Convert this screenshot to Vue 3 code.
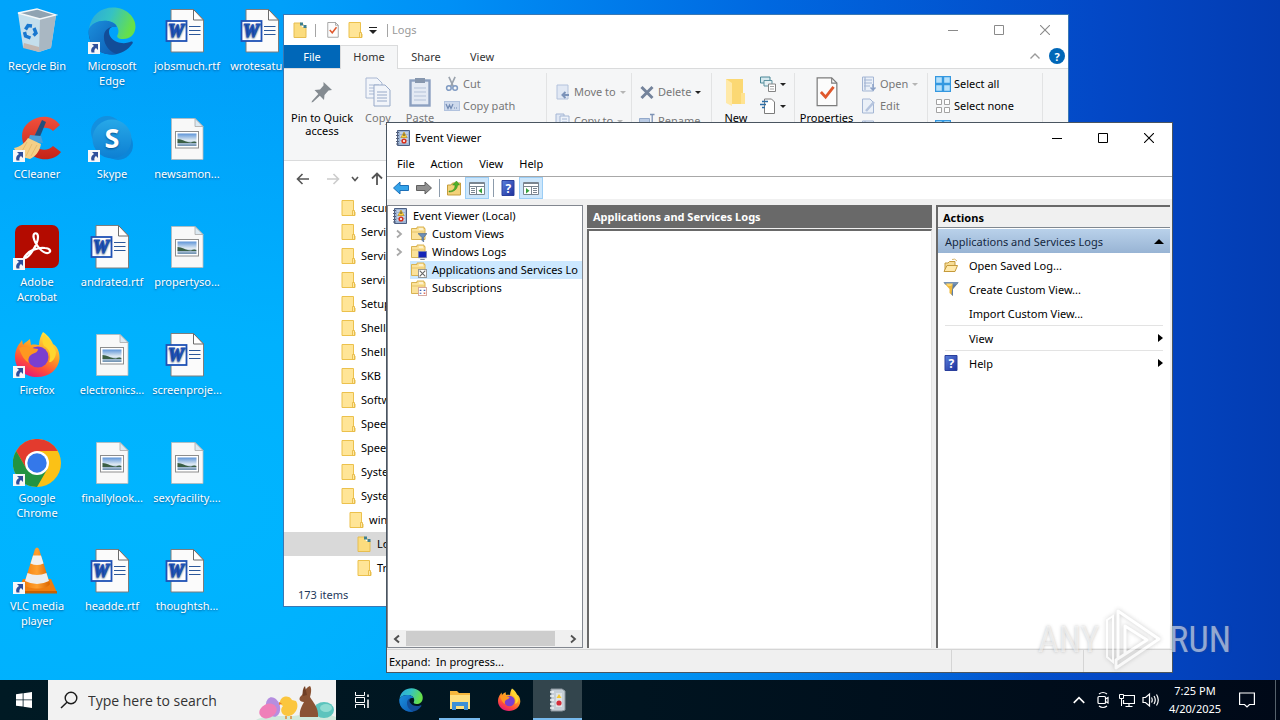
<template>
  <div class="screen">
    <!-- Shared icon sprite -->
    <svg class="sprite" aria-hidden="true">
      <defs>
        <linearGradient id="g-edge-top" x1="0" y1="0" x2="1" y2="0.3">
          <stop offset="0" stop-color="#2aa7dd" />
          <stop offset="0.5" stop-color="#35c2c4" />
          <stop offset="1" stop-color="#66e04a" />
        </linearGradient>
        <linearGradient id="g-edge-low" x1="0" y1="0" x2="1" y2="1">
          <stop offset="0" stop-color="#1b8fdc" />
          <stop offset="1" stop-color="#0c5cb4" />
        </linearGradient>
        <linearGradient id="g-fox" x1="0.8" y1="0" x2="0.3" y2="1">
          <stop offset="0" stop-color="#fff34a" />
          <stop offset="0.45" stop-color="#ff9a22" />
          <stop offset="0.75" stop-color="#ff4a3c" />
          <stop offset="1" stop-color="#e3187a" />
        </linearGradient>
        <linearGradient id="g-skype" x1="0" y1="0" x2="0" y2="1">
          <stop offset="0" stop-color="#27a8e8" />
          <stop offset="1" stop-color="#0d7fd2" />
        </linearGradient>
        <linearGradient id="g-photo" x1="0" y1="0" x2="0" y2="1">
          <stop offset="0" stop-color="#5d94d8" />
          <stop offset="0.55" stop-color="#dfeaf2" />
          <stop offset="1" stop-color="#6d8fb0" />
        </linearGradient>
        <linearGradient id="g-cone" x1="0" y1="0" x2="1" y2="0">
          <stop offset="0" stop-color="#f47d0a" />
          <stop offset="0.5" stop-color="#ffa030" />
          <stop offset="1" stop-color="#d96400" />
        </linearGradient>
        <linearGradient id="g-red" x1="0" y1="0" x2="0" y2="1">
          <stop offset="0" stop-color="#f0503c" />
          <stop offset="1" stop-color="#c42318" />
        </linearGradient>
        <linearGradient id="g-help" x1="0" y1="0" x2="1" y2="1">
          <stop offset="0" stop-color="#5a80dc" />
          <stop offset="1" stop-color="#1c2f9c" />
        </linearGradient>
      </defs>

      <symbol id="recycle" viewBox="0 0 48 48">
        <path d="M5 6 24 2 43 8 38 41 26 45 10 40Z" fill="#d9e4ea" opacity="0.9" />
        <path d="M27 12 43 8 38 41 26 45Z" fill="#a9b7c2" />
        <path d="M5 6 24 2 43 8 27 12Z" fill="#8fa3b2" stroke="#f4f8fa" stroke-width="1.3" />
        <path d="M11 36 26 40 26 45 10 41Z" fill="#c3b6b0" />
        <g fill="none" stroke="#1977cf" stroke-width="3.4">
          <path d="M12.500 22.500 15 18.500 19 19" />
          <path d="M21 21 23 26 20.500 28.500" />
          <path d="M17.500 31 12.500 29 11.500 25" />
        </g>
      </symbol>

      <symbol id="edge" viewBox="0 0 48 48">
        <path d="M1 22C-1 36 9 48 25 47.500 33 47 40 43 44.500 36.500 45.500 34.500 44 34 42 35 36 37.500 26 36 22 29 19 23 23 18 28.500 20L20 14Z" fill="#124d98" />
        <path d="M1 22C3 8 13 0.500 25 0.500 39 0.500 48 11 47.500 20 47 28 42 32 35 32 30 32 28 30 30 27 32 22 28 15 20 14 11 13 4 16 1 22Z" fill="url(#g-edge-top)" />
        <path d="M1 22C4 16 11 13 20 14 26 15 29 18 28.500 20 22 19 17 22 16 28 15 38 22 45 29 47 12 50-1 38 1 22Z" fill="url(#g-edge-low)" />
      </symbol>

      <symbol id="ccleaner" viewBox="0 0 48 48">
        <path d="M47 10 40 16C35 11 26 12 23 18 20 25 22 31 27 34 32 36 37 34 40 31L48 37C42 45 31 46 22 42 11 36 7 24 10 15 15 3 36-5 47 10Z" fill="url(#g-red)" />
        <path d="M29 5 33 7 26 24 21 22Z" fill="#234f7c" />
        <path d="M17 20 28 21 30 28 15 26Z" fill="#4aa0da" />
        <path d="M15 23 28 29C27 36 22 42 17 44L5 41 1 33C7 32 12 28 15 23Z" fill="#f5cf87" />
        <path d="M14 27 8 38M19 29 13 41M24 30 18 41" stroke="#e3b566" stroke-width="0.800" />
      </symbol>

      <symbol id="skype" viewBox="0 0 48 48">
        <circle cx="19" cy="17" r="16" fill="#1390df" />
        <circle cx="30" cy="30" r="15" fill="#0c86d8" />
        <circle cx="24" cy="24" r="19.500" fill="url(#g-skype)" />
        <text x="24" y="33" text-anchor="middle" font-family="'Open Sans', sans-serif" font-weight="700" font-size="27" fill="#fff">S</text>
      </symbol>

      <symbol id="acrobat" viewBox="0 0 48 48">
        <rect x="2" y="2" width="44" height="43" rx="7" fill="#b30b00" />
        <path d="M12 35C16 35 25 21 25 14 25 9 20 9 20.500 14 22 22 30 31 35 30 39 29 37 25 32 25 24 24 16 28 13 32 10 35 11 36 12 35Z" fill="none" stroke="#fff" stroke-width="2.200" />
      </symbol>

      <symbol id="firefox" viewBox="0 0 48 48">
        <path d="M30 1C36 5 39 10 40 13 44 15 47 21 46.500 28 45 39 36 46 24 46 12 46 2 38 2 26 2 21 4 15 7 12L9 9 10 14C12 11 15 10 17 8L18 14C21 13 24 14 26 14 26 9 28 4 30 1Z" fill="url(#g-fox)" />
        <circle cx="25" cy="26" r="10.500" fill="#7a3fd0" />
        <path d="M6 17C11 14 18 17 25 18 25 22 20 22 18 24 15 26 15 30 16 32 12 30 8 24 6 17Z" fill="#ff9820" />
        <path d="M31 15C36 17 39 25 36 31 39 32 43 27 43 21 42 16 36 9 31 3 29 8 29 11 31 15Z" fill="#ffd62e" />
      </symbol>

      <symbol id="chrome" viewBox="0 0 48 48">
        <circle cx="24" cy="24" r="24" fill="#fbc116" />
        <path d="M3.200 12A24 24 0 0 1 44.800 12H24L13.600 30Z" fill="#e33b2e" />
        <path d="M3.200 12A24 24 0 0 0 24 48L34.400 30 24 36 13.600 30Z" fill="#229342" />
        <circle cx="24" cy="24" r="12" fill="#fff" />
        <circle cx="24" cy="24" r="9.700" fill="#3478ea" />
      </symbol>

      <symbol id="vlc" viewBox="0 0 48 48">
        <path d="M10 32H38L44 45.500H4Z" fill="#ef7d10" />
        <path d="M4 44H44V46.500H4Z" fill="#c96000" />
        <path d="M22 2Q24-1 26 2L37 37C34 43 14 43 11 37Z" fill="url(#g-cone)" />
        <path d="M20 8.500H28L30.500 16.500Q24 19.500 17.500 16.500Z" fill="#f1f1f1" />
        <path d="M14.500 26Q24 30 33.500 26L36 34Q24 40 12 34Z" fill="#ededed" />
      </symbol>

      <symbol id="word" viewBox="0 0 48 48">
        <path d="M8 2.500H30.500L40.500 13V45H8Z" fill="#fbfbfb" stroke="#7d7d7d" stroke-width="1" />
        <path d="M30.500 2.500V13H40.500Z" fill="#fff" stroke="#6b6b6b" stroke-width="1" />
        <path d="M26 19.500H37.500M26 23.500H37.500M26 27.500H37.500" stroke="#2b579a" stroke-width="1.200" />
        <rect x="3.500" y="14" width="20" height="20" fill="#fff" stroke="#1f51b5" stroke-width="1.800" />
        <text x="13" y="30" text-anchor="middle" font-family="'Liberation Serif', serif" font-weight="700" font-style="italic" font-size="18" fill="#1f51b5" stroke="#1f51b5" stroke-width="1.200">W</text>
      </symbol>

      <symbol id="photo" viewBox="0 0 48 48">
        <path d="M8.500 3.500H32L40 11.500V44.500H8.500Z" fill="#f8f8f8" stroke="#b9b9b9" stroke-width="0.800" />
        <path d="M32 3.500V11.500H40Z" fill="#dce9f2" stroke="#a8a8a8" stroke-width="0.800" />
        <rect x="12.500" y="16.500" width="23" height="16.500" fill="#fff" stroke="#8d8d8d" />
        <rect x="14.500" y="18.500" width="19" height="12.500" fill="url(#g-photo)" />
        <path d="M14.500 24C19 24 22 27 28 27.500 30 26 33.500 26 33.500 28H14.500Z" fill="#3a5f45" />
      </symbol>

      <symbol id="shortcut" viewBox="0 0 12 12">
        <path d="M0 0H12V12H0Z" fill="#f6f7f9" />
        <path d="M4 2H10V8L8 6C6.500 7 6 8.500 6.500 10.500H3.500C2.500 7.500 3.500 5.500 6 4Z" fill="#2f4f9b" />
      </symbol>

      <symbol id="folder" viewBox="0 0 16 16">
        <path d="M2 0.500H13.500V11L15 12V15.500H2Z" fill="#ffe597" stroke="#ecc14c" stroke-width="1" />
        <path d="M12.500 10.500H14.500V15.500H12.500Z" fill="#ffeaa6" stroke="#e5b53c" stroke-width="0.800" />
      </symbol>

      <symbol id="folder-logs" viewBox="0 0 16 16">
        <path d="M2 1H9L14 5V15.500H2Z" fill="#fbdc7e" stroke="#e6bd50" stroke-width="1" />
        <path d="M8 0.500 13 5H10Z" fill="#fff" />
        <path d="M8 0.500H11V3.500H8ZM11.500 3H14.500V6H11.500Z" fill="#3f7f8f" />
      </symbol>

      <symbol id="check-page" viewBox="0 0 24 32">
        <path d="M1.500 1H17L22.500 6.500V30.500H1.500Z" fill="#fcfcfc" stroke="#7c7c7c" stroke-width="1.300" />
        <path d="M17 1V6.500H22.500" fill="none" stroke="#7c7c7c" stroke-width="1.200" />
        <path d="M5.500 16 10.500 21.500 19 10.500" fill="none" stroke="#e0582d" stroke-width="3" />
      </symbol>

      <symbol id="pin" viewBox="0 0 24 24">
        <path d="M13.500 2 22 10 18.500 10.500 14.500 15 14 20 9.800 15.700 3 22 1.500 22.500 2 21 8.300 14 4.500 10 10 9.500 13.500 5.500Z" fill="#848b91" />
      </symbol>

      <symbol id="copy" viewBox="0 0 26 30">
        <path d="M1 1H12L17 6V21H1Z" fill="#f2f5fa" stroke="#a9b8d2" />
        <path d="M4 8H14M4 11H14M4 14H14M4 17H14" stroke="#a9b8d2" />
        <path d="M9 8H20L25 13V29H9Z" fill="#f2f5fa" stroke="#97a9c8" />
        <path d="M12 15H22M12 18H22M12 21H22M12 24H22" stroke="#97a9c8" />
      </symbol>

      <symbol id="paste" viewBox="0 0 22 30">
        <rect x="1.500" y="3.500" width="19" height="25" fill="#e4eaf4" stroke="#8ca0c0" stroke-width="2.400" />
        <rect x="6" y="1" width="10" height="5" fill="#8797ae" />
        <path d="M5 11H17M5 15H17M5 19H17M5 23H17" stroke="#b3c1d8" />
      </symbol>

      <symbol id="scissors" viewBox="0 0 16 18">
        <path d="M4.500 1 9.500 12M11.500 1 6.500 12" stroke="#9aa2ad" stroke-width="1.800" />
        <circle cx="4.500" cy="13.500" r="2.600" fill="none" stroke="#7f9ac2" stroke-width="1.700" />
        <circle cx="11.500" cy="13.500" r="2.600" fill="none" stroke="#7f9ac2" stroke-width="1.700" />
      </symbol>

      <symbol id="path-chip" viewBox="0 0 16 16">
        <rect x="0.500" y="3.500" width="15" height="9" fill="#cdd9ec" stroke="#b1c2de" />
        <path d="M2 6 4 10.500 5.500 7 7 10.500 9 6M10 10H11M12 10H13" fill="none" stroke="#7089b2" stroke-width="1.200" />
      </symbol>

      <symbol id="page-arrow" viewBox="0 0 16 16">
        <path d="M2 1H13V15H2Z" fill="#e1e8f4" stroke="#b3c2dc" />
        <path d="M14 11H8M10.500 8 7.500 11 10.500 14" fill="none" stroke="#7c93b9" stroke-width="2" />
      </symbol>

      <symbol id="page-copy" viewBox="0 0 16 16">
        <path d="M1 1H9V13H1Z" fill="#e1e8f4" stroke="#a4b6d4" />
        <path d="M5 3H14V15H5Z" fill="#edf2f9" stroke="#a4b6d4" />
        <path d="M7 6H12M7 9H12" stroke="#a4b6d4" />
      </symbol>

      <symbol id="cross" viewBox="0 0 16 16">
        <path d="M2.500 3 13.500 14M13.500 3 2.500 14" stroke="#74839b" stroke-width="3" />
      </symbol>

      <symbol id="rename" viewBox="0 0 16 16">
        <path d="M0.500 5.500H10.500V11.500H0.500Z" fill="#b9cae3" stroke="#93a9cb" />
        <path d="M11 1.500H15.500M13.200 1.500V14" stroke="#7d92b5" stroke-width="1.300" />
      </symbol>

      <symbol id="big-folder" viewBox="0 0 24 30">
        <path d="M2 2H19V17L21 19V27H8L2 25Z" fill="#fbd873" />
        <path d="M2 2 8 6V29L2 26Z" fill="#ffe9a8" />
        <path d="M17 16H21V27H17Z" fill="#ffe391" />
      </symbol>

      <symbol id="new-item" viewBox="0 0 16 16">
        <path d="M0.500 1H10V7H0.500Z" fill="#d5e8ee" stroke="#4b8797" />
        <path d="M4 4.500H12V10H4Z" fill="#e6f0f3" stroke="#5d919f" />
        <path d="M8.500 8H15.500V15.500H8.500Z" fill="#fff" stroke="#858585" />
        <path d="M10 10.500H14M10 13H14" stroke="#a5a5a5" />
      </symbol>

      <symbol id="easy-access" viewBox="0 0 16 16">
        <path d="M4.500 1H11.500L14.500 4V15.500H4.500Z" fill="#fff" stroke="#7b7b7b" />
        <path d="M2 3.500H8M0 6.500H6M2 9.500H5" stroke="#2c6ea6" stroke-width="1.400" />
      </symbol>

      <symbol id="open" viewBox="0 0 16 16">
        <path d="M1.500 1H12.500V15H1.500Z" fill="#eaf0f8" stroke="#a4b6d4" />
        <path d="M3 4H11M3 7H11M3 10H9M4 1V14" stroke="#a4b6d4" stroke-width="1.200" />
        <path d="M12 8V14M9.500 11.500 12 14 14.500 11.500" fill="none" stroke="#8ba1c6" stroke-width="1.500" />
      </symbol>

      <symbol id="edit" viewBox="0 0 16 16">
        <path d="M1.500 1H9L12.500 4.500V15H1.500Z" fill="#eaf0f8" stroke="#a4b6d4" />
        <path d="M5 13 13 4" stroke="#b5c4de" stroke-width="2.500" />
      </symbol>

      <symbol id="select-all" viewBox="0 0 16 16">
        <path d="M0.600 0.600H7.400V7.400H0.600ZM8.600 0.600H15.400V7.400H8.600ZM0.600 8.600H7.400V15.400H0.600ZM8.600 8.600H15.400V15.400H8.600Z" fill="#b5e0fb" stroke="#3498e0" stroke-width="1.200" />
      </symbol>

      <symbol id="select-none" viewBox="0 0 16 16">
        <path d="M1.500 1.500H6.500V6.500H1.500ZM9.500 1.500H14.500V6.500H9.500ZM1.500 9.500H6.500V14.500H1.500ZM9.500 9.500H14.500V14.500H9.500Z" fill="#fff" stroke="#a3a3a3" />
      </symbol>

      <symbol id="journal" viewBox="0 0 16 16">
        <path d="M2.500 0.500H14.500V15.500H2.500Z" fill="#9db4d4" stroke="#4c5f83" />
        <path d="M5 3H13M5 6H13M5 9H13M5 12H13" stroke="#e8eef6" />
        <path d="M1 2.500H4M1 5.500H4M1 8.500H4M1 11.500H4M1 14H4" stroke="#55607a" />
        <path d="M9 2 12 7.500H6Z" fill="#ffd437" stroke="#c08c10" stroke-width="0.600" />
        <path d="M9 3.500V6" stroke="#333" />
        <circle cx="9" cy="11" r="2.600" fill="#d8321e" />
        <path d="M8 10 10 12M10 10 8 12" stroke="#fff" stroke-width="0.800" />
      </symbol>

      <symbol id="arrow-left" viewBox="0 0 16 16">
        <path d="M0.500 8 7 2V5.500H15.500V10.500H7V14Z" fill="#35a4ea" stroke="#1b6fb8" />
      </symbol>

      <symbol id="arrow-right" viewBox="0 0 16 16">
        <path d="M15.500 8 9 2V5.500H0.500V10.500H9V14Z" fill="#8f8f8f" stroke="#606060" />
      </symbol>

      <symbol id="folder-up" viewBox="0 0 16 16">
        <path d="M1.500 5H5L6.500 3H14.500V15H1.500Z" fill="#f3d27b" stroke="#c69d3c" />
        <path d="M3 11C7 11 9 9 9 5H6.500L10.500 1 13.500 5H11.500C11.500 9 8 12 3 12Z" fill="#4fb02c" stroke="#2f8a15" stroke-width="0.500" />
      </symbol>

      <symbol id="pane-left" viewBox="0 0 16 16">
        <path d="M0.500 2.500H15.500V14.500H0.500Z" fill="#fff" stroke="#7a8590" />
        <path d="M0.500 3.500H15.500M0.500 6.500H15.500M7.500 7V14.500" stroke="#7a8590" />
        <path d="M2 8.500H6M2 10.500H6M2 12.500H6" stroke="#7a8590" />
        <path d="M13 8V13.500L9.500 10.700Z" fill="#35a03a" />
      </symbol>

      <symbol id="pane-right" viewBox="0 0 16 16">
        <path d="M0.500 2.500H15.500V14.500H0.500Z" fill="#fff" stroke="#7a8590" />
        <path d="M0.500 3.500H15.500M0.500 6.500H15.500M8.500 7V14.500" stroke="#7a8590" />
        <path d="M10 8.500H14M10 10.500H14M10 12.500H14" stroke="#7a8590" />
        <path d="M3 8V13.500L6.500 10.700Z" fill="#35a03a" />
      </symbol>

      <symbol id="help" viewBox="0 0 16 16">
        <path d="M2 0.500H14V15.500H2Z" fill="url(#g-help)" stroke="#2a3f9c" />
        <text x="8.300" y="12.500" text-anchor="middle" font-family="'Open Sans', sans-serif" font-weight="700" font-size="12" fill="#fff">?</text>
      </symbol>

      <symbol id="tree-folder" viewBox="0 0 16 16">
        <path d="M0.500 2.500H6V1H13V2.500H14V13.500H0.500Z" fill="#fbe29a" stroke="#d9b352" />
        <path d="M1 6H14" stroke="#e7c469" />
        <path d="M8 3H12" stroke="#fff" />
      </symbol>

      <symbol id="badge-filter" viewBox="0 0 8 8">
        <path d="M0 0.500H8L5 4V8L3.500 6.500V4Z" fill="#6e8fb6" stroke="#3c5a80" stroke-width="0.500" />
      </symbol>
      <symbol id="badge-screen" viewBox="0 0 8 8">
        <path d="M0.300 0.300H7.700V6H0.300Z" fill="#1626b8" stroke="#8c98a8" stroke-width="0.600" />
        <path d="M2 7.500H6" stroke="#7c8796" />
      </symbol>
      <symbol id="badge-config" viewBox="0 0 8 8">
        <path d="M0.300 0.300H7.700V7.700H0.300Z" fill="#fff" stroke="#777" stroke-width="0.800" />
        <path d="M1.500 1.500 6.500 6.500M6.500 1.500 1.500 6.500" stroke="#666" />
      </symbol>
      <symbol id="badge-calendar" viewBox="0 0 8 8">
        <path d="M0.300 0.300H7.700V7.700H0.300Z" fill="#fff" stroke="#c98f84" stroke-width="0.800" />
        <path d="M1.500 3H3M5 3H6.500M1.500 5.500H3" stroke="#3f63b5" />
        <path d="M5 5.500H6.500" stroke="#d2402c" />
      </symbol>

      <symbol id="open-log" viewBox="0 0 16 16">
        <path d="M2 14V6H5L6.500 4.500H12V8" fill="#f6dc95" stroke="#c59a3b" />
        <path d="M1 14.500 4 8.500H14.500L12 14.500Z" fill="#ffe9ac" stroke="#c59a3b" />
        <path d="M9 2.500Q12 1 14 4" fill="none" stroke="#d9b76a" />
      </symbol>

      <symbol id="funnel" viewBox="0 0 16 16">
        <path d="M0.500 1.500H15.500L10 8V15L6.500 12V8Z" fill="#f0b93b" />
        <path d="M10 1.500H15.500L10 8V15L8.500 13.500Z" fill="#5d7ea8" />
        <path d="M0.500 1H15.500L14 3.500H2Z" fill="#7793b5" />
        <path d="M3 2.500H10L8 5H5Z" fill="#ffd669" />
      </symbol>

      <symbol id="win-logo" viewBox="0 0 16 16">
        <path d="M0 2.300 6.700 1.300V7.500H0ZM7.500 1.200 16 0V7.500H7.500ZM0 8.300H6.700V14.600L0 13.700ZM7.500 8.300H16V16L7.500 14.800Z" fill="#fff" />
      </symbol>

      <symbol id="lens" viewBox="0 0 18 18">
        <circle cx="11" cy="7" r="5.800" fill="none" stroke="#1c1c1c" stroke-width="1.400" />
        <path d="M7 11.200 1 17" stroke="#1c1c1c" stroke-width="1.500" />
      </symbol>

      <symbol id="easter" viewBox="0 0 80 40">
        <path d="M0 40C12 33 30 38 44 35 58 31 70 33 80 37V40Z" fill="#cfe9dc" />
        <ellipse cx="68" cy="30" rx="10" ry="8" fill="#5cc4bd" />
        <ellipse cx="70" cy="28" rx="6" ry="4" fill="#8fdcd2" />
        <ellipse cx="17" cy="27" rx="7" ry="10" transform="rotate(-15 17 27)" fill="#b58ee0" />
        <ellipse cx="12" cy="31" rx="9" ry="7" transform="rotate(-25 12 31)" fill="#ef7fb9" />
        <path d="M24 24C23 16 33 14 36 20L40 21C44 27 39 36 32 36 26 36 23 30 27 26Z" fill="#fbc63e" />
        <path d="M23 22 26 23.500 23 25Z" fill="#ec7d22" />
        <path d="M30 36V39M35 36V39" stroke="#e07d20" stroke-width="1.300" />
        <path d="M54 6C56 8 55 14 54 17 57 22 63 28 62 37H44C43 30 46 26 48 22 43 22 42 18 46 15 48 11 51 7 54 6Z" fill="#8a5334" />
        <path d="M49 6C47 8 46 12 47 16L51 15Z" fill="#6f3f26" />
      </symbol>

      <symbol id="task-view" viewBox="0 0 16 16">
        <path d="M1.500 0V3.500H10.500V0M1.500 16V12.500H10.500V16M1.500 5.500H10.500V10.500H1.500Z" fill="none" stroke="#fff" />
        <path d="M14 2.500V5M14 7.500V16" stroke="#fff" stroke-width="1.500" />
      </symbol>

      <symbol id="files" viewBox="0 0 24 24">
        <path d="M2 3H9L11 5H22V21H2Z" fill="#f6b73c" />
        <path d="M2 7H22V21H2Z" fill="#ffdf7e" />
        <path d="M4 14H20V22H16V18H8V22H4Z" fill="#3d8fd6" />
      </symbol>

      <symbol id="log-book" viewBox="0 0 20 24">
        <path d="M3 1H14L17 3V22L14 23H3Z" fill="#c5ced6" stroke="#8a949c" />
        <path d="M2 4H6M2 8H6M2 12H6M2 16H6M2 20H6" stroke="#eef2f4" stroke-width="1.500" />
        <path d="M8 5H14V19H8Z" fill="#dfe3e6" />
        <path d="M11 6 13.500 10H8.500Z" fill="#f5c72e" />
        <circle cx="11" cy="15" r="2.600" fill="#d42d3a" />
      </symbol>

      <symbol id="camera" viewBox="0 0 18 18">
        <path d="M5 3Q9 0 13 3M5 15Q9 18 13 15" fill="none" stroke="#fff" stroke-width="1.200" />
        <rect x="4" y="5.500" width="7.500" height="7" rx="1" fill="none" stroke="#fff" stroke-width="1.200" />
        <path d="M11.500 8 14 6.500V12L11.500 10.500" fill="none" stroke="#fff" stroke-width="1.200" />
      </symbol>

      <symbol id="network" viewBox="0 0 16 16">
        <path d="M5 3.500H15.500V11.500H4.500V8M10 11.500V14M6.500 14.500H13.500" fill="none" stroke="#fff" stroke-width="1.200" />
        <path d="M0.500 2.500H4.500V6.500H0.500ZM2.500 6.500V14" fill="none" stroke="#fff" />
      </symbol>

      <symbol id="sound" viewBox="0 0 18 16">
        <path d="M1 5.500H3.500L7.500 2V14L3.500 10.500H1Z" fill="none" stroke="#fff" stroke-width="1.200" />
        <path d="M9.500 5.500Q11 8 9.500 10.500M12 4Q14.500 8 12 12M14.500 2.500Q18 8 14.500 13.500" fill="none" stroke="#fff" stroke-width="1.200" />
      </symbol>

      <symbol id="notice" viewBox="0 0 16 16">
        <path d="M0.600 1H15.400V12.500H10.500L8 15 5.500 12.500H0.600Z" fill="none" stroke="#fff" stroke-width="1.200" />
      </symbol>

      <symbol id="chev-up" viewBox="0 0 12 12">
        <path d="M1.500 8.500 6 4 10.500 8.500" fill="none" stroke="currentColor" stroke-width="1.400" />
      </symbol>
      <symbol id="chev-down" viewBox="0 0 12 12">
        <path d="M3 4 6 7.500 9 4" fill="none" stroke="currentColor" stroke-width="1.600" />
      </symbol>
      <symbol id="chev-left" viewBox="0 0 12 12">
        <path d="M8 2.500 4 6 8 9.500" fill="none" stroke="currentColor" stroke-width="2" />
      </symbol>
      <symbol id="chev-right" viewBox="0 0 12 12">
        <path d="M4 2.500 8 6 4 9.500" fill="none" stroke="currentColor" stroke-width="1.800" />
      </symbol>
      <symbol id="nav-back" viewBox="0 0 14 14">
        <path d="M13 7H2M6.500 2 1.500 7 6.500 12" fill="none" stroke="currentColor" stroke-width="1.600" />
      </symbol>
      <symbol id="nav-next" viewBox="0 0 14 14">
        <path d="M1 7H12M7.500 2 12.500 7 7.500 12" fill="none" stroke="currentColor" stroke-width="1.600" />
      </symbol>
      <symbol id="nav-up" viewBox="0 0 14 14">
        <path d="M7 13V2M2 6.500 7 1.500 12 6.500" fill="none" stroke="currentColor" stroke-width="1.800" />
      </symbol>
      <symbol id="min" viewBox="0 0 10 10"><path d="M0 5.500H10" stroke="currentColor" /></symbol>
      <symbol id="max" viewBox="0 0 10 10"><path d="M0.500 0.500H9.500V9.500H0.500Z" fill="none" stroke="currentColor" /></symbol>
      <symbol id="close" viewBox="0 0 10 10"><path d="M0 0 10 10M10 0 0 10" stroke="currentColor" stroke-width="1.100" /></symbol>
    </svg>

    <main class="desktop">
      <div class="shortcuts">
        <button v-for="item in shortcuts" :key="item.name" class="shortcut">
          <span class="shortcut-art">
            <svg class="shortcut-icon"><use :href="'#' + item.icon" /></svg>
            <svg v-if="item.link" class="shortcut-badge"><use href="#shortcut" /></svg>
          </span>
          <span class="shortcut-name">{{ item.name }}</span>
        </button>
      </div>

      <!-- File Explorer -->
      <section class="window explorer" aria-label="Logs">
        <header class="ex-title">
          <svg class="i16"><use href="#folder-logs" /></svg>
          <span class="tick"></span>
          <button aria-label="Properties"><svg class="i16"><use href="#check-page" /></svg></button>
          <button aria-label="New folder"><svg class="i16"><use href="#folder" /></svg></button>
          <button class="qat-more" aria-label="Customize Quick Access Toolbar"><i></i></button>
          <span class="tick"></span>
          <span class="ex-name">Logs</span>
          <div class="controls muted">
            <button v-for="c in controls" :key="c" :aria-label="c"><svg><use :href="'#' + c" /></svg></button>
          </div>
        </header>

        <nav class="ex-tabs">
          <button class="tab file">File</button>
          <button
            v-for="tab in ribbonTabs"
            :key="tab"
            class="tab"
            :class="{ active: tab === activeTab }"
            @click="activeTab = tab"
          >{{ tab }}</button>
          <span class="ex-fold"><svg class="i12"><use href="#chev-up" /></svg></span>
          <button class="ex-help" aria-label="Help">?</button>
        </nav>

        <div class="ribbon">
          <div class="group clipboard">
            <button class="big pin"><svg class="art24"><use href="#pin" /></svg>Pin to Quick access</button>
            <button class="big dim"><svg><use href="#copy" /></svg>Copy</button>
            <button class="big dim"><svg><use href="#paste" /></svg>Paste</button>
            <div class="stack">
              <button class="dim"><svg class="i16"><use href="#scissors" /></svg><span>Cut</span></button>
              <button class="dim"><svg class="i16"><use href="#path-chip" /></svg><span>Copy path</span></button>
              <button class="dim" aria-label="Paste shortcut"><svg class="i16"><use href="#path-chip" /></svg></button>
            </div>
          </div>
          <div class="group moving loose">
            <div class="stack">
              <button class="dim"><svg class="i16"><use href="#page-arrow" /></svg><span>Move to</span><i class="caret"></i></button>
              <button class="dim"><svg class="i16"><use href="#page-copy" /></svg><span>Copy to</span><i class="caret"></i></button>
            </div>
          </div>
          <div class="group removing loose">
            <div class="stack">
              <button class="dim"><svg class="i16"><use href="#cross" /></svg><span>Delete</span><i class="caret dark"></i></button>
              <button class="dim"><svg class="i16"><use href="#rename" /></svg><span>Rename</span></button>
            </div>
          </div>
          <div class="group fresh">
            <button class="big"><svg><use href="#big-folder" /></svg>New</button>
            <div class="stack">
              <button aria-label="New item"><svg class="i16"><use href="#new-item" /></svg><i class="caret dark"></i></button>
              <button aria-label="Easy access"><svg class="i16"><use href="#easy-access" /></svg><i class="caret dark"></i></button>
            </div>
          </div>
          <div class="group opening">
            <button class="big"><svg><use href="#check-page" /></svg>Properties</button>
            <div class="stack">
              <button class="dim"><svg class="i16"><use href="#open" /></svg><span>Open</span><i class="caret"></i></button>
              <button class="dim"><svg class="i16"><use href="#edit" /></svg><span>Edit</span></button>
              <button class="dim" aria-label="History"><svg class="i16"><use href="#open" /></svg></button>
            </div>
          </div>
          <div class="group selecting">
            <div class="stack">
              <button><svg class="i16"><use href="#select-all" /></svg><span>Select all</span></button>
              <button><svg class="i16"><use href="#select-none" /></svg><span>Select none</span></button>
              <button aria-label="Invert selection"><svg class="i16"><use href="#select-all" /></svg></button>
            </div>
          </div>
        </div>

        <div class="ex-nav">
          <button aria-label="Back"><svg class="i14"><use href="#nav-back" /></svg></button>
          <button class="off" aria-label="Forward"><svg class="i14"><use href="#nav-next" /></svg></button>
          <button aria-label="Recent locations"><svg class="i12"><use href="#chev-down" /></svg></button>
          <button aria-label="Up"><svg class="i14"><use href="#nav-up" /></svg></button>
        </div>

        <ul class="ex-tree">
          <li v-for="(row, i) in folders" :key="i" :class="['depth-' + row.depth, { selected: row.selected }]">
            <svg class="i16"><use :href="row.selected ? '#folder-logs' : '#folder'" /></svg>
            <span>{{ row.name }}</span>
          </li>
        </ul>
        <footer class="ex-status">173 items</footer>
      </section>

      <!-- Event Viewer -->
      <section class="window viewer" aria-label="Event Viewer">
        <header class="ev-title">
          <svg class="i16"><use href="#journal" /></svg>
          <span>Event Viewer</span>
          <div class="controls">
            <button v-for="c in controls" :key="c" :aria-label="c"><svg><use :href="'#' + c" /></svg></button>
          </div>
        </header>
        <nav class="ev-menu">
          <button v-for="m in menus" :key="m">{{ m }}</button>
        </nav>
        <div class="ev-tools">
          <button aria-label="Back"><svg class="i16"><use href="#arrow-left" /></svg></button>
          <button aria-label="Forward"><svg class="i16"><use href="#arrow-right" /></svg></button>
          <span class="rule"></span>
          <button aria-label="Up one level"><svg class="i16"><use href="#folder-up" /></svg></button>
          <button class="pressed" aria-label="Console tree"><svg class="i16"><use href="#pane-left" /></svg></button>
          <span class="rule"></span>
          <button aria-label="Help"><svg class="i16"><use href="#help" /></svg></button>
          <button class="pressed" aria-label="Action pane"><svg class="i16"><use href="#pane-right" /></svg></button>
        </div>

        <div class="ev-body">
          <aside class="ev-tree">
            <ul>
              <li class="root"><svg class="i16"><use href="#journal" /></svg><button>Event Viewer (Local)</button></li>
              <li v-for="n in nodes" :key="n.name">
                <span class="twist"><svg v-if="n.open" class="i12"><use href="#chev-right" /></svg></span>
                <div class="node" :class="{ selected: n.name === current }" @click="current = n.name">
                  <span class="node-art">
                    <svg class="i16"><use href="#tree-folder" /></svg>
                    <svg class="node-badge"><use :href="'#badge-' + n.badge" /></svg>
                  </span>
                  <button>{{ n.name }}</button>
                </div>
              </li>
            </ul>
            <div class="hscroll">
              <button aria-label="Scroll left"><svg class="i12"><use href="#chev-left" /></svg></button>
              <div class="track"><span class="thumb"></span></div>
              <button aria-label="Scroll right"><svg class="i12"><use href="#chev-right" /></svg></button>
            </div>
          </aside>

          <div class="ev-main">
            <h2>Applications and Services Logs</h2>
            <div class="ev-list"></div>
          </div>

          <aside class="ev-actions">
            <h3>Actions</h3>
            <button class="section">Applications and Services Logs<i class="fold"></i></button>
            <button><svg class="i16"><use href="#open-log" /></svg>Open Saved Log...</button>
            <button><svg class="i16"><use href="#funnel" /></svg>Create Custom View...</button>
            <button><span class="i16"></span>Import Custom View...</button>
            <hr>
            <button><span class="i16"></span>View<i class="more"></i></button>
            <hr>
            <button><svg class="i16"><use href="#help" /></svg>Help<i class="more"></i></button>
          </aside>
        </div>

        <footer class="ev-status">
          <span class="message">Expand:&nbsp; In progress...</span>
          <span class="cell"></span>
          <span class="cell small"></span>
        </footer>
      </section>

      <div class="watermark">
        <span>ANY</span>
        <svg viewBox="0 0 64 64">
          <path d="M16 51V3L57 31 14 60V52L45 32 23 18V47" fill="none" stroke="#fff" stroke-width="3" stroke-linejoin="round" />
          <path d="M5 49V12L11 8V54Z" fill="none" stroke="#fff" stroke-width="2" />
        </svg>
        <span>RUN</span>
      </div>
    </main>

    <!-- Taskbar -->
    <footer class="taskbar">
      <button class="start" aria-label="Start"><svg class="i16"><use href="#win-logo" /></svg></button>
      <div class="search">
        <svg class="i18"><use href="#lens" /></svg>
        <input v-model="query" type="text" placeholder="Type here to search" aria-label="Type here to search">
        <svg class="search-art"><use href="#easter" /></svg>
      </div>
      <button
        v-for="app in apps"
        :key="app.label"
        class="app"
        :class="{ running: app.running, focused: app.focused }"
        :aria-label="app.label"
      ><svg :class="app.size"><use :href="'#' + app.icon" /></svg></button>
      <div class="tray">
        <button aria-label="Show hidden icons"><svg class="i14"><use href="#chev-up" /></svg></button>
        <button aria-label="Meet Now"><svg class="i18"><use href="#camera" /></svg></button>
        <button aria-label="Network"><svg class="i16"><use href="#network" /></svg></button>
        <button aria-label="Volume"><svg class="i18"><use href="#sound" /></svg></button>
        <button class="clock"><span>7:25 PM</span><span>4/20/2025</span></button>
        <button class="notice" aria-label="Notifications"><svg class="i16"><use href="#notice" /></svg></button>
        <span class="peek"></span>
      </div>
    </footer>
  </div>
</template>

<script setup>
import { ref } from 'vue'

const query = ref('')
const activeTab = ref('Home')
const current = ref('Applications and Services Lo')

const controls = ['min', 'max', 'close']
const ribbonTabs = ['Home', 'Share', 'View']
const menus = ['File', 'Action', 'View', 'Help']

// Filled column by column, six per column
const shortcuts = [
  { name: 'Recycle Bin', icon: 'recycle' },
  { name: 'CCleaner', icon: 'ccleaner', link: true },
  { name: 'Adobe Acrobat', icon: 'acrobat', link: true },
  { name: 'Firefox', icon: 'firefox', link: true },
  { name: 'Google Chrome', icon: 'chrome', link: true },
  { name: 'VLC media player', icon: 'vlc', link: true },
  { name: 'Microsoft Edge', icon: 'edge', link: true },
  { name: 'Skype', icon: 'skype', link: true },
  { name: 'andrated.rtf', icon: 'word' },
  { name: 'electronics...', icon: 'photo' },
  { name: 'finallylook...', icon: 'photo' },
  { name: 'headde.rtf', icon: 'word' },
  { name: 'jobsmuch.rtf', icon: 'word' },
  { name: 'newsamon...', icon: 'photo' },
  { name: 'propertyso...', icon: 'photo' },
  { name: 'screenproje...', icon: 'word' },
  { name: 'sexyfacility....', icon: 'photo' },
  { name: 'thoughtsh...', icon: 'word' },
  { name: 'wrotesatur...', icon: 'word' }
]

const folders = [
  { name: 'security', depth: 1 },
  { name: 'ServiceProfiles', depth: 1 },
  { name: 'ServiceState', depth: 1 },
  { name: 'servicing', depth: 1 },
  { name: 'Setup', depth: 1 },
  { name: 'ShellComponents', depth: 1 },
  { name: 'ShellExperiences', depth: 1 },
  { name: 'SKB', depth: 1 },
  { name: 'SoftwareDistribution', depth: 1 },
  { name: 'Speech', depth: 1 },
  { name: 'Speech_OneCore', depth: 1 },
  { name: 'System', depth: 1 },
  { name: 'System32', depth: 1 },
  { name: 'winevt', depth: 2 },
  { name: 'Logs', depth: 3, selected: true },
  { name: 'TraceFormat', depth: 3 }
]

const nodes = [
  { name: 'Custom Views', badge: 'filter', open: true },
  { name: 'Windows Logs', badge: 'screen', open: true },
  { name: 'Applications and Services Lo', badge: 'config' },
  { name: 'Subscriptions', badge: 'calendar' }
]

const apps = [
  { label: 'Task View', icon: 'task-view', size: 'i16' },
  { label: 'Microsoft Edge', icon: 'edge', size: 'i24' },
  { label: 'File Explorer', icon: 'files', size: 'i24', running: true },
  { label: 'Firefox', icon: 'firefox', size: 'i24' },
  { label: 'Event Viewer', icon: 'log-book', size: 'i24', running: true, focused: true }
]
</script>

<style>
body {
  margin: 0;
  overflow: hidden;
}
</style>

<style scoped>
.screen {
  height: 100vh;
  display: flex;
  flex-direction: column;
  overflow: hidden;
  font-family: 'Noto Sans', 'Open Sans', sans-serif;
  font-size: 11px;
  line-height: 15px;
  color: #000;
}

.sprite {
  position: absolute;
  width: 0;
  height: 0;
}

.screen svg {
  flex: none;
  display: block;
}

button {
  font: inherit;
  color: inherit;
  background: none;
  border: 0;
  padding: 0;
  margin: 0;
  white-space: nowrap;
}

ul {
  list-style: none;
  margin: 0;
  padding: 0;
}

.i12 { width: 12px; height: 12px; }
.i14 { width: 14px; height: 14px; }
.i16 { width: 16px; height: 16px; flex: none; }
.i18 { width: 18px; height: 18px; }
.i24 { width: 24px; height: 24px; }

/* Desktop */
.desktop {
  flex: 1;
  min-height: 0;
  position: relative;
  overflow: hidden;
  background:
    radial-gradient(ellipse at 12% 75%, #00b5ff 0%, rgba(0, 181, 255, 0.8) 25%, rgba(0, 176, 255, 0) 60%),
    linear-gradient(90deg, #00a4fb 0%, #00a0fa 22%, #0090f6 35%, #0068e0 60%, #0348c6 86%, #033cb2 100%);
}

.shortcuts {
  display: grid;
  grid-auto-flow: column;
  grid-template-rows: repeat(6, 108px);
  grid-auto-columns: 75px;
}

.shortcut {
  display: flex;
  flex-direction: column;
  align-items: center;
  gap: 3px;
  padding: 7px 2px 0 1px;
  color: #fff;
  white-space: normal;
  text-shadow: 0 1px 2px rgba(0, 40, 90, 0.6);
}

.shortcut-art {
  position: relative;
}

.shortcut-name {
  max-width: 70px;
}

.shortcut-icon {
  width: 48px;
  height: 48px;
}

.shortcut-badge {
  position: absolute;
  left: 0;
  bottom: 1px;
  width: 12px;
  height: 12px;
}

/* Windows */
.window {
  position: absolute;
  display: flex;
  flex-direction: column;
  overflow: hidden;
  background: #fff;
  box-sizing: border-box;
}

.explorer {
  left: 283px;
  top: 14px;
  right: 211px;
  bottom: 73px;
  border: 1px solid #3a78b4;
}

.viewer {
  left: 386px;
  top: 122px;
  right: 107px;
  bottom: 7px;
  border: 1px solid #4a5560;
  background: #f0f0f0;
}

.controls {
  display: flex;
  margin-left: auto;
}

.controls button {
  width: 46px;
  height: 28px;
  display: grid;
  place-items: center;
}

.controls svg {
  width: 10px;
  height: 10px;
}

.controls.muted {
  color: #8a8a8a;
}

/* Explorer */
.ex-title {
  display: flex;
  align-items: center;
  height: 30px;
  flex: none;
  padding-left: 8px;
}

.ex-title > button {
  width: 22px;
  display: grid;
  place-items: center;
}

.ex-title > button:first-of-type {
  margin-left: 2px;
}

.tick {
  width: 1px;
  height: 13px;
  margin: 0 4px 0 7px;
  background: #a5a5a5;
}

.ex-title > .qat-more {
  width: 14px;
}

.qat-more i {
  border: 4px solid transparent;
  border-top-color: #222;
  border-bottom: 0;
  position: relative;
  top: 2px;
}

.qat-more i::before {
  content: '';
  position: absolute;
  left: -4px;
  top: -7px;
  width: 8px;
  height: 1px;
  background: #222;
}

.ex-name {
  padding-bottom: 1px;
  color: #999;
}

.ex-tabs {
  display: flex;
  align-items: stretch;
  height: 23px;
  flex: none;
  border-bottom: 1px solid #dadbdc;
}

.tab {
  width: 56px;
  padding-bottom: 1px;
  color: #333;
}

.tab.active {
  margin-bottom: -1px;
  width: 58px;
  background: #f5f6f7;
  border: 1px solid #dadbdc;
  border-bottom: 0;
  padding-bottom: 2px;
}

.tab.file {
  background: #0067b8;
  color: #fff;
}

.ex-fold {
  margin: 5px 8px 0 auto;
  color: #9a9a9a;
}

.ex-help {
  width: 16px;
  height: 16px;
  margin: 3px 3px 0 0;
  border-radius: 50%;
  background: #0067b8;
  color: #fff;
  font-weight: 700;
}

.ribbon {
  display: flex;
  height: 92px;
  flex: none;
  box-sizing: border-box;
  background: #f5f6f7;
  border-bottom: 1px solid #dadbdc;
  padding-top: 4px;
  overflow: hidden;
}

.group {
  display: flex;
  align-items: flex-start;
  flex: none;
  box-sizing: border-box;
  border-right: 1px solid #e2e3e4;
}

.clipboard { width: 263px; padding-left: 3px; }
.moving { width: 85px; padding-left: 8px; }
.removing { width: 80px; padding-left: 7px; }
.fresh { width: 83px; padding-left: 3px; }
.opening { width: 133px; }
.selecting { width: 115px; padding-left: 4px; }

.big {
  width: 42px;
  display: flex;
  flex-direction: column;
  align-items: center;
  gap: 4px;
  padding-top: 4px;
  line-height: 13px;
  white-space: normal;
}

.big svg {
  width: 30px;
  height: 30px;
}

.big svg.art24 {
  width: 24px;
}

.pin { width: 70px; }
.opening .big { width: 63px; }
.dim { color: #777; }

.stack {
  display: flex;
  flex-direction: column;
  padding-left: 3px;
}

.stack button {
  display: flex;
  align-items: center;
  gap: 3px;
  height: 22px;
}

.stack button span {
  padding-bottom: 2px;
}

.loose .stack {
  padding: 8px 0 0 0;
  gap: 7px;
}

.caret {
  margin-left: 1px;
  border: 3px solid transparent;
  border-top-color: #b5b5b5;
  border-bottom: 0;
}

.caret.dark {
  border-top-color: #222;
}

.ex-nav {
  display: flex;
  align-items: center;
  height: 35px;
  flex: none;
  padding-left: 12px;
  gap: 16px;
  color: #555;
}

.ex-nav button:nth-child(n + 3) {
  margin-left: -7px;
}

.ex-nav .off {
  color: #ccc;
}

.ex-tree {
  flex: 1;
  min-height: 0;
  overflow: hidden;
}

.ex-tree li {
  display: flex;
  align-items: center;
  gap: 5px;
  height: 24px;
  white-space: nowrap;
}

.ex-tree span {
  padding-bottom: 2px;
}

.depth-1 { padding-left: 56px; }
.depth-2 { padding-left: 64px; }
.depth-3 { padding-left: 72px; }
.ex-tree .selected { background: #d9d9d9; }

.ex-status {
  flex: none;
  padding: 0 14px 4px;
  color: #1e395b;
}

/* Event Viewer */
.ev-title {
  display: flex;
  align-items: center;
  gap: 4px;
  height: 29px;
  flex: none;
  padding-left: 8px;
  background: #fff;
}

.ev-menu {
  display: flex;
  gap: 16px;
  height: 24px;
  flex: none;
  padding-left: 10px;
  background: #fff;
  border-bottom: 1px solid #a8a8a8;
}

.ev-menu button {
  padding-bottom: 2px;
}

.ev-tools {
  display: flex;
  align-items: center;
  height: 22px;
  flex: none;
  padding-left: 2px;
  background: #fff;
}

.ev-tools button {
  width: 21px;
  height: 20px;
  display: grid;
  place-items: center;
  border: 1px solid transparent;
  box-sizing: content-box;
}

.ev-tools .pressed {
  width: 22px;
  background: #cce6fb;
  border-color: #9bcdf5;
}

.rule {
  width: 1px;
  height: 18px;
  margin: 0 2px 0 4px;
  background: #8c9bab;
}

.ev-body {
  flex: 1;
  min-height: 0;
  display: flex;
  gap: 4px;
  padding: 6px 2px 1px 0;
}

.ev-tree {
  flex: 0 0 196px;
  box-sizing: border-box;
  display: flex;
  flex-direction: column;
  border: 1px solid #828790;
  background: #fff;
}

.ev-tree ul {
  flex: 1;
  padding-top: 1px;
  overflow: hidden;
}

.ev-tree li {
  display: flex;
  align-items: center;
  height: 18px;
}

.ev-tree li button {
  padding-bottom: 2px;
}

.root {
  padding-left: 4px;
  gap: 5px;
}

.twist {
  width: 24px;
  padding-left: 5px;
  box-sizing: border-box;
  flex: none;
  color: #a8a8a8;
}

.node {
  flex: 1;
  min-width: 0;
  display: flex;
  align-items: center;
  gap: 5px;
  height: 18px;
  margin-left: -2px;
  padding-left: 1px;
  overflow: hidden;
}

.node.selected {
  background: #cce8ff;
}

.node-art {
  position: relative;
}

.node-badge {
  position: absolute;
  right: 0;
  bottom: 0;
  width: 9px;
  height: 9px;
}

.hscroll {
  display: flex;
  height: 17px;
  background: #f0f0f0;
  color: #505050;
}

.hscroll button {
  width: 18px;
  display: grid;
  place-items: center;
}

.track {
  flex: 1;
  display: flex;
  padding: 1px 0;
}

.thumb {
  flex: 0 0 94%;
  background: #cdcdcd;
}

.ev-main {
  flex: 1;
  min-width: 0;
  display: flex;
  flex-direction: column;
  gap: 1px;
}

.ev-main h2 {
  margin: 0;
  padding: 4px 6px;
  background: #696969;
  color: #fff;
  font-size: 11px;
  font-weight: 700;
}

.ev-list {
  flex: 1;
  background: #fff;
  border: 1px solid #696969;
  border-width: 2px 1px 0 2px;
  border-right-color: #e3e3e3;
}

.ev-actions {
  flex: 0 0 234px;
  box-sizing: border-box;
  display: flex;
  flex-direction: column;
  background: #fff;
  border-top: 2px solid #696969;
  border-left: 2px solid #696969;
}

.ev-actions h3 {
  margin: 0 0 1px;
  padding: 3px 5px 2px;
  font-size: 11px;
  font-weight: 700;
  background: #f0f0f0;
  border-bottom: 1px solid #808890;
}

.ev-actions button {
  display: flex;
  align-items: center;
  gap: 10px;
  height: 24px;
  padding: 0 6px 0 5px;
  text-align: left;
}

.ev-actions .section {
  padding-left: 7px;
  background: linear-gradient(#b9d1ea, #98b4d4);
  color: #14283f;
}

.ev-actions hr {
  width: 94%;
  margin: 0 auto;
  border: 0;
  border-top: 1px solid #e3e3e3;
}

.fold {
  margin-left: auto;
  border: 5px solid transparent;
  border-top: 0;
  border-bottom-color: #000;
}

.more {
  margin-left: auto;
  margin-right: 1px;
  border: 4px solid transparent;
  border-left: 5px solid #000;
  border-right: 0;
}

.ev-status {
  display: flex;
  align-items: center;
  height: 22px;
  flex: none;
  border-top: 1px solid #d5d5d5;
}

.message {
  flex: 1;
  padding-left: 2px;
}

.cell {
  align-self: stretch;
  width: 131px;
  border-left: 1px solid #d5d5d5;
}

.cell.small {
  width: 88px;
}

.watermark {
  position: absolute;
  right: 49px;
  bottom: 8px;
  display: flex;
  align-items: center;
  gap: 3px;
  font-family: 'Roboto Condensed', 'Liberation Sans Narrow', 'Liberation Sans', sans-serif;
  font-size: 36px;
  line-height: 64px;
  color: rgba(255, 255, 255, 0.55);
  text-shadow: 0 0 3px rgba(90, 90, 90, 0.35);
  pointer-events: none;
}

.watermark svg {
  width: 64px;
  height: 64px;
  opacity: 0.6;
  filter: drop-shadow(0 0 2px rgba(80, 80, 80, 0.5));
}

/* Taskbar */
.taskbar {
  display: flex;
  height: 40px;
  flex: none;
  background: linear-gradient(90deg, #001a24, #001420 50%, #000918);
  color: #fff;
}

.start {
  width: 48px;
  display: grid;
  place-items: center;
}

.search {
  width: 288px;
  margin-right: 1px;
  display: flex;
  align-items: center;
  background: #f2f2f2;
}

.search .i18 {
  margin-left: 12px;
}

.search input {
  flex: 1;
  min-width: 0;
  border: 0;
  padding: 1px 0 0 10px;
  background: none;
  outline: none;
  font: 14px/20px 'Open Sans', sans-serif;
  color: #222;
}

.search input::placeholder {
  color: #333;
  opacity: 1;
}

.search-art {
  width: 80px;
  height: 40px;
}

.app {
  width: 49px;
  display: grid;
  place-items: center;
  position: relative;
}

.app.focused {
  background: #33454d;
}

.app.running::after {
  content: '';
  position: absolute;
  left: 4px;
  right: 4px;
  bottom: 0;
  height: 2px;
  background: #76b9ed;
}

.app.focused::after {
  left: 0;
  right: 0;
}

.tray {
  display: flex;
  margin-left: auto;
}

.tray button {
  width: 24px;
  display: grid;
  place-items: center;
}

.tray .clock {
  width: 64px;
  align-content: center;
  line-height: 18px;
}

.tray .notice {
  width: 40px;
  margin-right: 8px;
}

.peek {
  width: 4px;
  border-left: 1px solid #56626c;
}
</style>
